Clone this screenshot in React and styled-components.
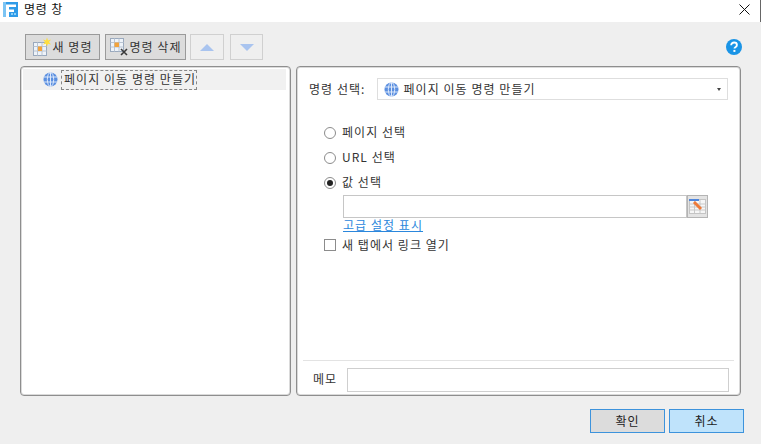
import React from "react";
import styled, { createGlobalStyle } from "styled-components";

const GlobalStyle = createGlobalStyle`
  html, body {
    margin: 0;
    padding: 0;
    width: 761px;
    height: 444px;
    overflow: hidden;
    background: #efefef;
  }
  * {
    box-sizing: border-box;
  }
`;

const GlobeIcon = ({ size = 15 }) => (
  <svg width={size} height={size} viewBox="0 0 15 15" fill="none">
    <circle cx="7.5" cy="7.5" r="7" fill="#5b8fe0" />
    <g stroke="#dce8fa" strokeWidth="1">
      <ellipse cx="7.5" cy="7.5" rx="3.2" ry="7" />
      <path d="M7.5 .5v14M.8 5h13.4M.8 10h13.4" />
    </g>
  </svg>
);

const LogoIcon = () => (
  <svg width="15" height="15" viewBox="0 0 15 15">
    <rect width="15" height="15" fill="#2f9be8" />
    <path d="M0 0h3v15H0z" fill="#7cc4f3" />
    <path d="M3 2.500h10v2.500H6v2.500h5V10H6v5H3z" fill="#fff" />
    <path d="M8 11h2v2H8zM11 11h2v2h-2z" fill="#8fd0f7" />
  </svg>
);

const NewCommandIcon = () => (
  <svg width="20" height="20" viewBox="0 0 20 20" fill="none">
    <rect x="1.5" y="5.5" width="13" height="13" fill="#eef3f9" stroke="#9aa9bd" />
    <path d="M1.5 9.5h13M1.5 14h13M5.5 5.5v13M10 5.5v13" stroke="#b9c4d2" />
    <rect x="6" y="9.5" width="4" height="4.5" fill="#f2a33c" />
    <path d="M15 0.5l1 3 3-1-2 2.500 2 2.500-3-.8-1 2.800-1-2.800-3 .8 2-2.500-2-2.500 3 1z" fill="#ffdf3d" />
  </svg>
);

const DeleteCommandIcon = () => (
  <svg width="20" height="20" viewBox="0 0 20 20" fill="none">
    <rect x="1.500" y="1.500" width="13" height="13" fill="#eef3f9" stroke="#9aa9bd" />
    <path d="M1.500 5.500h13M1.500 10h13M5.500 1.500v13M10 1.500v13" stroke="#b9c4d2" />
    <rect x="5.500" y="5.500" width="4.500" height="4.500" fill="#f2a33c" />
    <path d="M12 12l6 6M18 12l-6 6" stroke="#3a3a3a" strokeWidth="1.600" />
  </svg>
);

const TablePickIcon = () => (
  <svg width="17" height="15" viewBox="0 0 17 15" fill="none">
    <rect x=".5" y=".5" width="16" height="14" fill="#f6f6f6" stroke="#c4c4c4" />
    <path d="M.5 5h16M.5 8h16M.5 11h16M5.500 1v13M11 1v13" stroke="#c8c8c8" />
    <rect x="0" y="0" width="10" height="2" fill="#4f86dc" />
    <path d="M5 3l7 7" stroke="#ee7a3a" strokeWidth="3" />
  </svg>
);

const HelpIcon = () => (
  <svg width="16" height="16" viewBox="0 0 16 16">
    <circle cx="8" cy="8" r="8" fill="#1a94e6" />
    <path
      d="M5.200 6.200c0-1.700 1.300-2.700 2.900-2.700s2.800 1 2.800 2.400c0 1.200-.7 1.800-1.500 2.300-.6.400-.9.700-.9 1.400"
      fill="none"
      stroke="#fff"
      strokeWidth="1.900"
    />
    <rect x="7.400" y="10.900" width="2" height="2" fill="#fff" />
  </svg>
);

const CloseIcon = () => (
  <svg width="11" height="11" viewBox="0 0 11 11">
    <path d="M.5 .5l10 10M10.500 .5l-10 10" stroke="#111" strokeWidth="1" />
  </svg>
);

const Window = styled.div`
  width: 761px;
  height: 444px;
  display: flex;
  flex-direction: column;
  background: #efefef;
  font-family: "Noto Sans CJK KR", "Noto Sans", sans-serif;
  font-size: 12px;
  line-height: 15px;
  letter-spacing: 1.05px;
  color: #333;
`;

// Noto sits lower in its line box than the original UI font
const Label = styled.span`
  padding-bottom: 2px;
  white-space: nowrap;
`;

const TitleBar = styled.div`
  height: 22px;
  flex: none;
  display: flex;
  align-items: center;
  gap: 6px;
  padding: 0 10px 4px 3px;
  background: #fff;
  border-right: 1px solid #666;
  color: #111;
`;

const TitleText = styled(Label)`
  flex: 1;
  letter-spacing: 0.8px;
`;

const Toolbar = styled.div`
  height: 26px;
  margin-top: 12px;
  flex: none;
  display: flex;
  align-items: stretch;
  padding: 0 20px 0 25px;
`;

const ToolButton = styled.div`
  width: ${(p) => p.$width}px;
  margin-right: ${(p) => p.$gap}px;
  display: flex;
  align-items: center;
  justify-content: center;
  border: 1px solid ${(p) => (p.$pressed ? "#9a9a9a" : "#d0d0d0")};
  background: ${(p) => (p.$pressed ? "#dcdcdc" : "#efefef")};
  color: #333;
`;

const Triangle = styled.span`
  width: 0;
  height: 0;
  border-left: 7px solid transparent;
  border-right: 7px solid transparent;
  border-${(p) => (p.$down ? "top" : "bottom")}: 7px solid #a9c4ef;
`;

const HelpSlot = styled.div`
  margin-left: auto;
  margin-right: -1px;
  padding-top: 5px;
`;

const Panels = styled.div`
  height: 330px;
  margin-top: 6px;
  flex: none;
  display: flex;
  gap: 5px;
  padding: 0 20px;
`;

const Panel = styled.div`
  width: ${(p) => p.$width}px;
  background: #fff;
  border: 1px solid #8e8e8e;
  padding: 1px;
  box-shadow: inset 0 0 0 1px #dadada;
  border-radius: 4px;
  display: flex;
  flex-direction: column;
`;

const TreeRow = styled.div`
  height: 21px;
  margin: 1px 3px 0 1px;
  display: flex;
  align-items: center;
  padding-left: 20px;
  gap: 3px;
  background: #f1f1f1;
`;

const TreeLabel = styled.span`
  height: 20px;
  padding: 0 0 0 2px;
  display: flex;
  align-items: center;
  border: 1px dashed #888;
  color: #333;
`;

const Form = styled.div`
  flex: 1;
  display: flex;
  flex-direction: column;
  padding: 10px 11px 0 11px;
`;

const CommandRow = styled.div`
  height: 22px;
  display: flex;
  align-items: center;
  gap: 12px;
`;

const Select = styled.div`
  flex: 1;
  height: 22px;
  display: flex;
  align-items: center;
  gap: 4px;
  padding: 0 6px;
  border: 1px solid #dedede;
  color: #333;
`;

const SelectText = styled(Label)`
  flex: 1;
`;

const Caret = styled.span`
  width: 0;
  height: 0;
  border-left: 2px solid transparent;
  border-right: 2px solid transparent;
  border-top: 3px solid #444;
`;

const Options = styled.div`
  margin-top: 20px;
  padding-left: 15px;
  display: flex;
  flex-direction: column;
`;

const OptionRow = styled.div`
  height: 25px;
  display: flex;
  align-items: center;
  gap: 6px;
`;

const Radio = styled.span`
  width: 12px;
  height: 12px;
  flex: none;
  border: 1px solid #8c8c8c;
  border-radius: 50%;
  display: flex;
  align-items: center;
  justify-content: center;
  &::after {
    content: "";
    width: 6px;
    height: 6px;
    border-radius: 50%;
    background: ${(p) => (p.$checked ? "#222" : "transparent")};
  }
`;

const ValueBlock = styled.div`
  padding-left: 19px;
  display: flex;
  flex-direction: column;
  align-items: flex-start;
`;

const ValueRow = styled.div`
  width: 365px;
  height: 23px;
  display: flex;
`;

const ValueInput = styled.div`
  flex: 1;
  background: #fff;
  border: 1px solid #c6c6c6;
`;

const PickButton = styled.div`
  width: 21px;
  display: flex;
  align-items: center;
  justify-content: center;
  background: #e3e3e3;
  border: 1px solid #b4b4b4;
`;

const AdvancedLink = styled.a`
  height: 16px;
  line-height: 14px;
  color: #2b87dc;
  text-decoration: underline;
`;

const CheckRow = styled.div`
  height: 16px;
  margin-top: 3px;
  display: flex;
  align-items: center;
  gap: 6px;
`;

const CheckBox = styled.span`
  width: 12px;
  height: 12px;
  flex: none;
  border: 1px solid #8c8c8c;
  background: #fff;
`;

const MemoSection = styled.div`
  margin: auto 5px 0 5px;
  height: 34px;
  border-top: 1px solid #e3e3e3;
  padding: 7px 5px 0 10px;
  display: flex;
  align-items: flex-start;
  gap: 10px;
`;

const MemoLabel = styled.span`
  line-height: 22px;
  color: #333;
`;

const MemoInput = styled.div`
  flex: 1;
  height: 24px;
  border: 1px solid #cfcfcf;
`;

const Footer = styled.div`
  margin-top: 13px;
  padding-right: 17px;
  display: flex;
  justify-content: flex-end;
  gap: 4px;
`;

const DialogButton = styled.div`
  width: 75px;
  height: 24px;
  display: flex;
  align-items: center;
  justify-content: center;
  border: 1px solid #3d93dc;
  background: ${(p) => (p.$hover ? "#bfe3fb" : "#dcdcdc")};
  color: #222;
`;

export default function App() {
  return (
    <Window>
      <GlobalStyle />
      <TitleBar>
        <LogoIcon />
        <TitleText>명령 창</TitleText>
        <CloseIcon />
      </TitleBar>
      <Toolbar>
        <ToolButton $width={75} $gap={5} $pressed>
          <NewCommandIcon />
          <Label>새 명령</Label>
        </ToolButton>
        <ToolButton $width={81} $gap={4} $pressed>
          <DeleteCommandIcon />
          <Label>명령 삭제</Label>
        </ToolButton>
        <ToolButton $width={34} $gap={6}>
          <Triangle />
        </ToolButton>
        <ToolButton $width={33} $gap={0}>
          <Triangle $down />
        </ToolButton>
        <HelpSlot>
          <HelpIcon />
        </HelpSlot>
      </Toolbar>
      <Panels>
        <Panel $width={271}>
          <TreeRow>
            <GlobeIcon />
            <TreeLabel>
              <Label>페이지 이동 명령 만들기</Label>
            </TreeLabel>
          </TreeRow>
        </Panel>
        <Panel $width={445}>
          <Form>
            <CommandRow>
              <Label>명령 선택:</Label>
              <Select>
                <GlobeIcon />
                <SelectText>페이지 이동 명령 만들기</SelectText>
                <Caret />
              </Select>
            </CommandRow>
            <Options>
              <OptionRow>
                <Radio />
                <Label>페이지 선택</Label>
              </OptionRow>
              <OptionRow>
                <Radio />
                <Label>URL 선택</Label>
              </OptionRow>
              <OptionRow>
                <Radio $checked />
                <Label>값 선택</Label>
              </OptionRow>
              <ValueBlock>
                <ValueRow>
                  <ValueInput />
                  <PickButton>
                    <TablePickIcon />
                  </PickButton>
                </ValueRow>
                <AdvancedLink>고급 설정 표시</AdvancedLink>
              </ValueBlock>
              <CheckRow>
                <CheckBox />
                <Label>새 탭에서 링크 열기</Label>
              </CheckRow>
            </Options>
          </Form>
          <MemoSection>
            <MemoLabel>메모</MemoLabel>
            <MemoInput />
          </MemoSection>
        </Panel>
      </Panels>
      <Footer>
        <DialogButton>
          <Label>확인</Label>
        </DialogButton>
        <DialogButton $hover>
          <Label>취소</Label>
        </DialogButton>
      </Footer>
    </Window>
  );
}
